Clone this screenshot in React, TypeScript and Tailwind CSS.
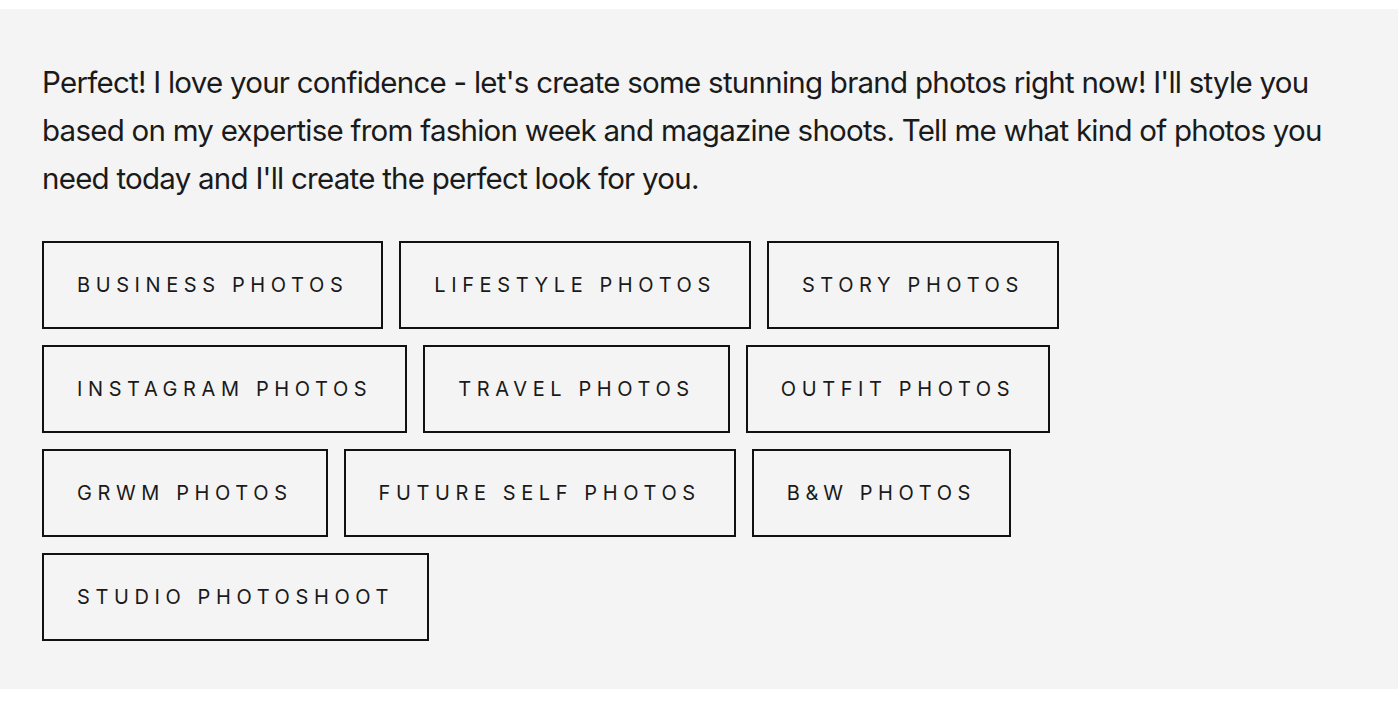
import React from "react";

const options = [
  "BUSINESS PHOTOS",
  "LIFESTYLE PHOTOS",
  "STORY PHOTOS",
  "INSTAGRAM PHOTOS",
  "TRAVEL PHOTOS",
  "OUTFIT PHOTOS",
  "GRWM PHOTOS",
  "FUTURE SELF PHOTOS",
  "B&W PHOTOS",
  "STUDIO PHOTOSHOOT",
];

export default function App() {
  return (
    <div className="min-h-[714px] bg-white pt-[9px]" style={{ fontFamily: "Inter, 'Noto Sans', sans-serif" }}>
      <div className="h-[680px] bg-[#f4f4f4] px-[42px] pt-[49px]">
        <div className="max-w-[1300px]">
          <p className="text-[29.5px] leading-[48px] text-[#1a1a1a] tracking-[-0.75px]">
            Perfect! I love your confidence - let's create some stunning brand photos right now! I'll style you based on my expertise from fashion week and magazine shoots. Tell me what kind of photos you need today and I'll create the perfect look for you.
          </p>
          <div className="mt-[39px] flex flex-wrap gap-4">
            {options.map((o) => (
              <button
                key={o}
                className="h-[88px] border-2 border-[#111] px-[33px] text-[20px] tracking-[5.6px] text-[#1a1a1a]"
              >
                {o}
              </button>
            ))}
          </div>
        </div>
      </div>
    </div>
  );
}
